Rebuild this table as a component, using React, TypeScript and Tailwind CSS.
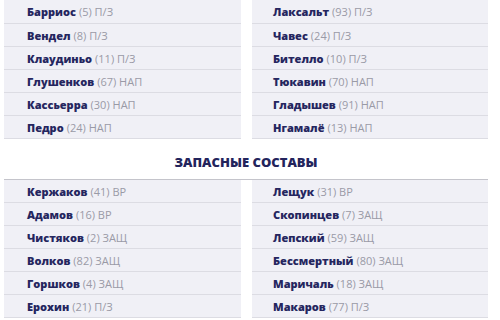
import React from "react";

type P = { n: string; num: string; pos: string };

const topLeft: P[] = [
  { n: "Барриос", num: "5", pos: "П/З" },
  { n: "Вендел", num: "8", pos: "П/З" },
  { n: "Клаудиньо", num: "11", pos: "П/З" },
  { n: "Глушенков", num: "67", pos: "НАП" },
  { n: "Кассьерра", num: "30", pos: "НАП" },
  { n: "Педро", num: "24", pos: "НАП" },
];
const topRight: P[] = [
  { n: "Лаксальт", num: "93", pos: "П/З" },
  { n: "Чавес", num: "24", pos: "П/З" },
  { n: "Бителло", num: "10", pos: "П/З" },
  { n: "Тюкавин", num: "70", pos: "НАП" },
  { n: "Гладышев", num: "91", pos: "НАП" },
  { n: "Нгамалё", num: "13", pos: "НАП" },
];
const botLeft: P[] = [
  { n: "Кержаков", num: "41", pos: "ВР" },
  { n: "Адамов", num: "16", pos: "ВР" },
  { n: "Чистяков", num: "2", pos: "ЗАЩ" },
  { n: "Волков", num: "82", pos: "ЗАЩ" },
  { n: "Горшков", num: "4", pos: "ЗАЩ" },
  { n: "Ерохин", num: "21", pos: "П/З" },
];
const botRight: P[] = [
  { n: "Лещук", num: "31", pos: "ВР" },
  { n: "Скопинцев", num: "7", pos: "ЗАЩ" },
  { n: "Лепский", num: "59", pos: "ЗАЩ" },
  { n: "Бессмертный", num: "80", pos: "ЗАЩ" },
  { n: "Маричаль", num: "18", pos: "ЗАЩ" },
  { n: "Макаров", num: "77", pos: "П/З" },
];

function Col({ items, first, pl }: { items: P[]; first?: boolean; pl: string }) {
  return (
    <div className="flex flex-col">
      {items.map((p, i) => (
        <div
          key={i}
          className={
            "flex items-center bg-[#f0f0f6] border-b border-[#dcdce3] text-[11px] leading-none " +
            pl +
            " " +
            (first && i === 0 ? "h-[24px]" : "h-[23px]")
          }
        >
          <span className="font-extrabold text-[#25265f]">{p.n}</span>
          <span className="ml-[3px] text-[#9a9aa6]">
            ({p.num}) {p.pos}
          </span>
        </div>
      ))}
    </div>
  );
}

export default function App() {
  return (
    <div
      className="w-[500px] h-[320px] overflow-hidden bg-white"
      style={{ fontFamily: '"Open Sans", "Noto Sans", sans-serif' }}
    >
      <div className="w-[484px] ml-[4px]">
        <div className="grid grid-cols-[237px_236px] gap-x-[11px]">
          <Col items={topLeft} first pl="pl-[23px]" />
          <Col items={topRight} first pl="pl-[21px]" />
        </div>
        <div className="pt-[15px] pb-[9px] text-center text-[13px] leading-[16px] font-extrabold text-[#23245c]">
          ЗАПАСНЫЕ СОСТАВЫ
        </div>
        <div className="h-[1px] bg-[#c4c4cb]" />
        <div className="grid grid-cols-[237px_236px] gap-x-[11px]">
          <Col items={botLeft} pl="pl-[23px]" />
          <Col items={botRight} pl="pl-[21px]" />
        </div>
      </div>
    </div>
  );
}
